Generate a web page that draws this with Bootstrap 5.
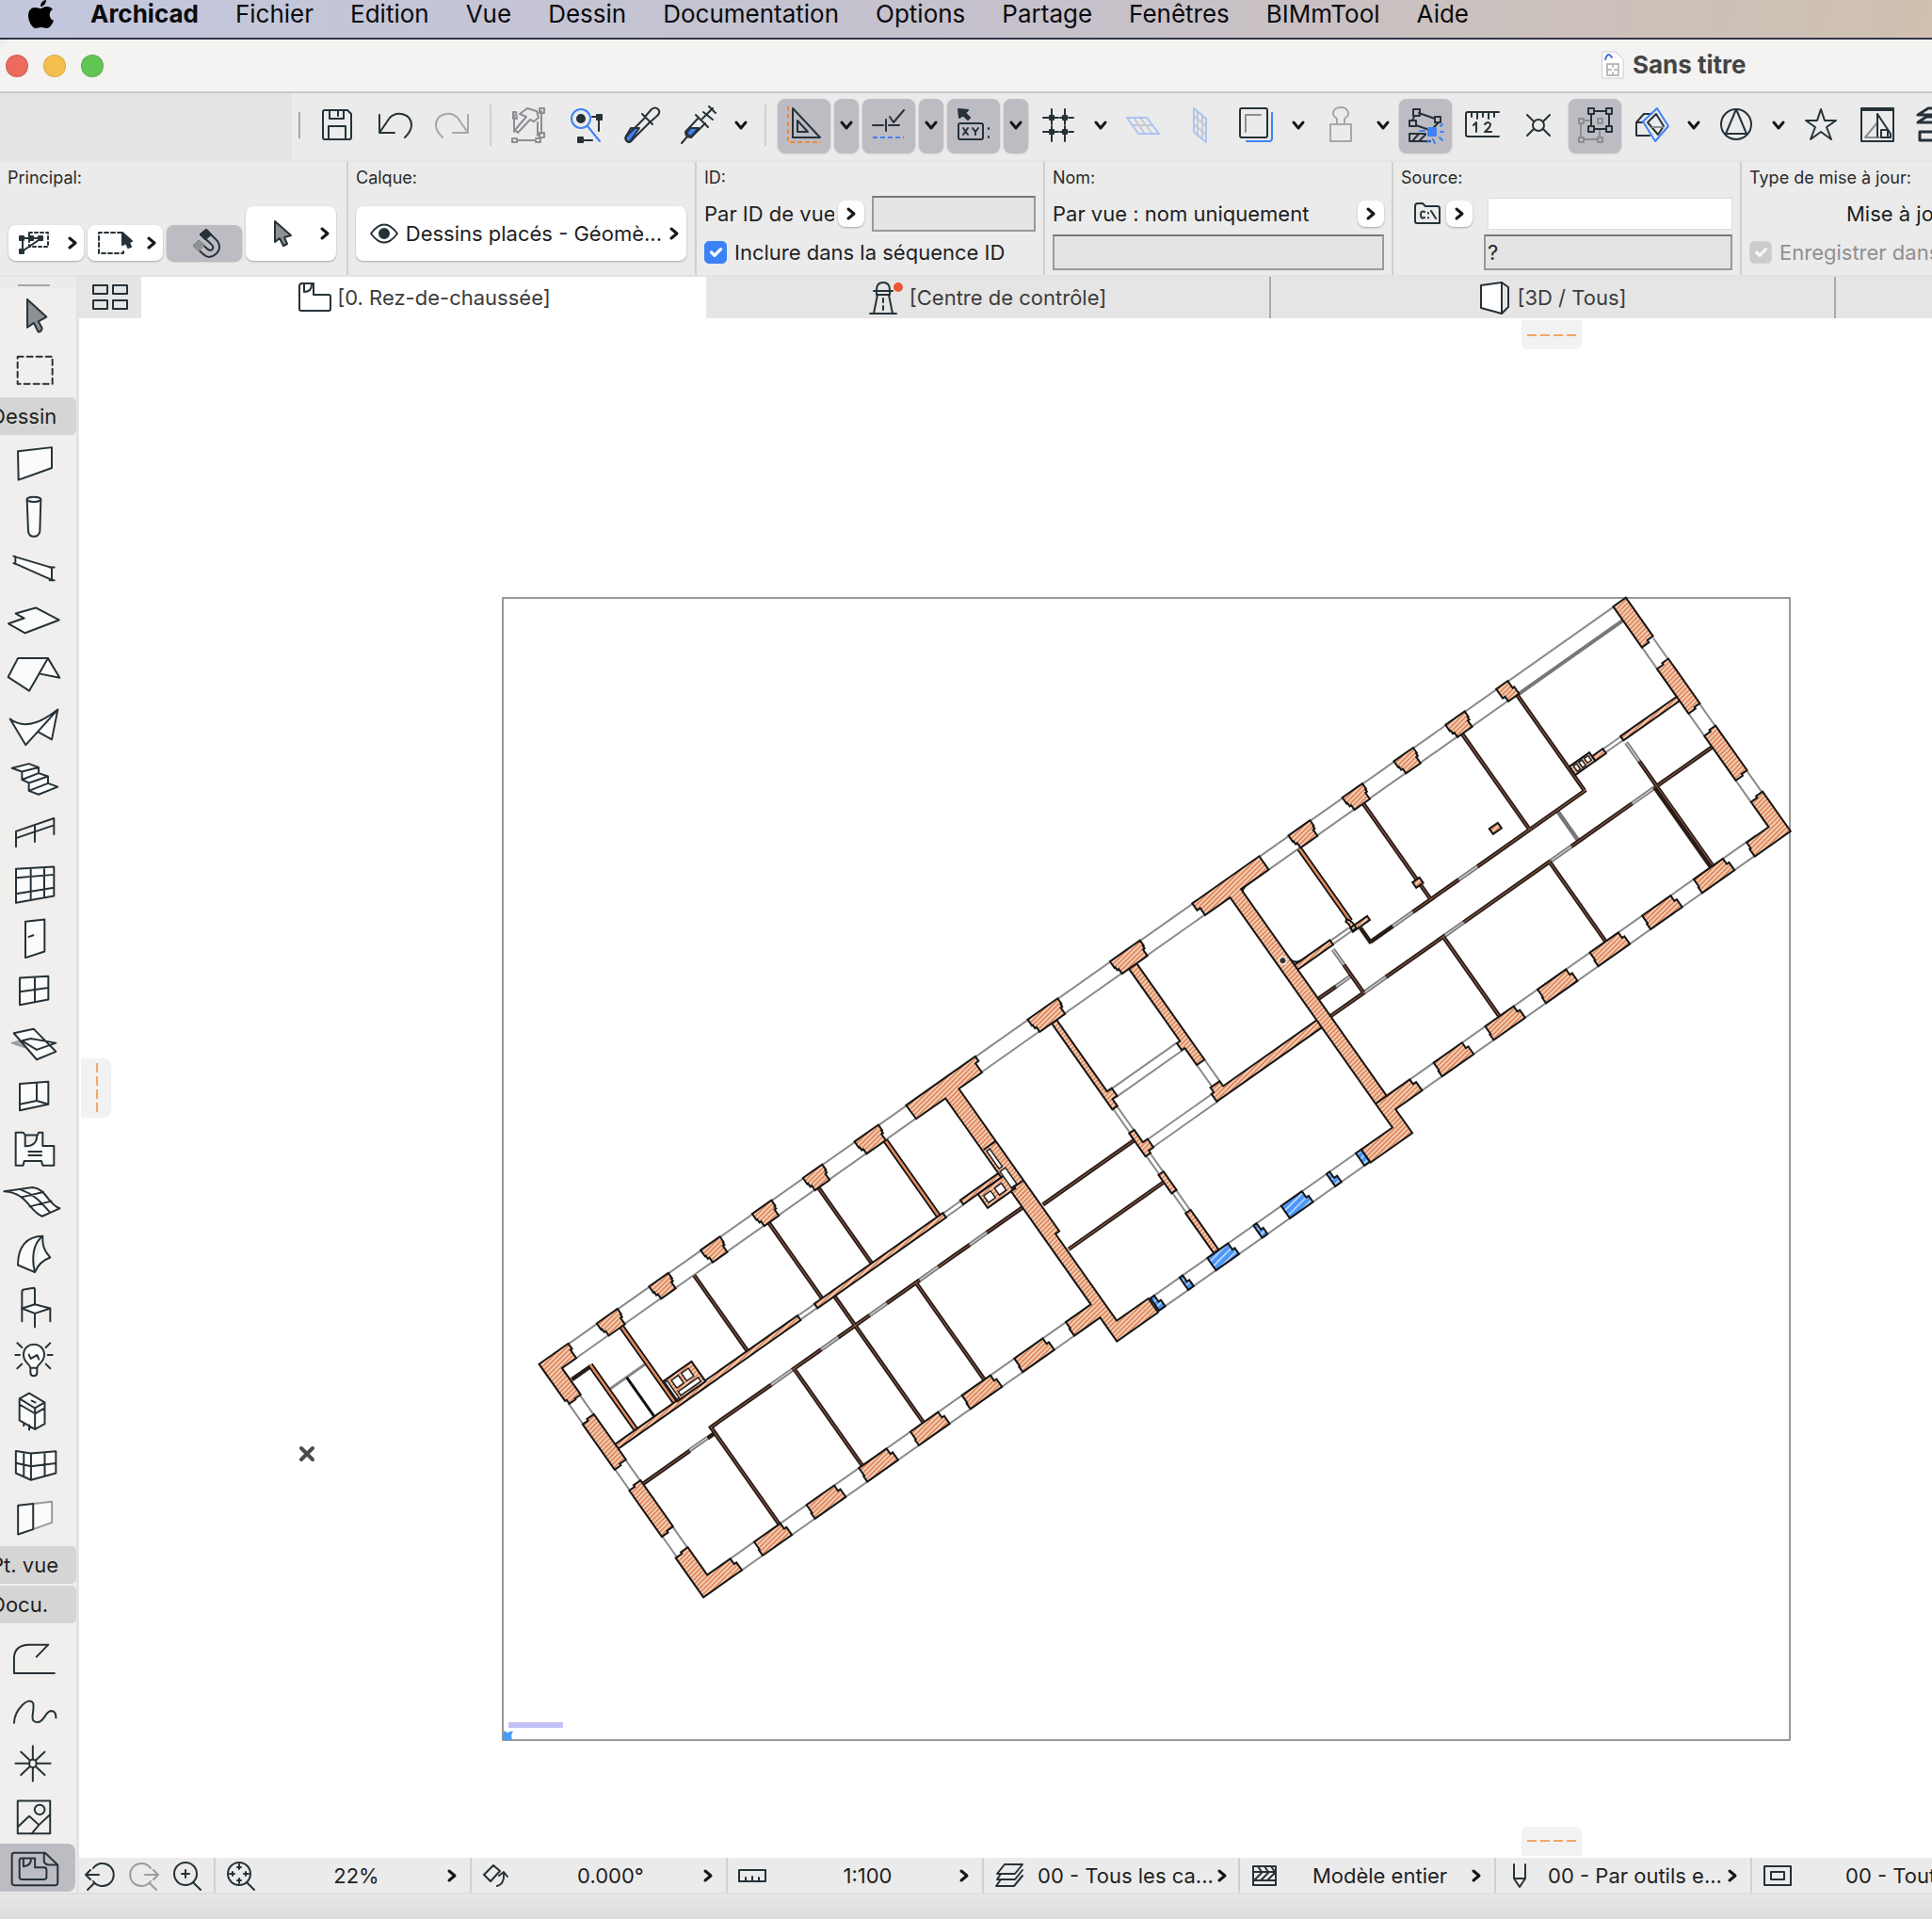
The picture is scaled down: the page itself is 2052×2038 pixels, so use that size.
<!DOCTYPE html>
<html lang="fr">
<head>
<meta charset="utf-8">
<meta name="viewport" content="width=device-width, initial-scale=1">
<title>Sans titre</title>
<link href="https://cdn.jsdelivr.net/npm/bootstrap@5.3.0/dist/css/bootstrap.min.css" rel="stylesheet">
<style>
:root{--ink:#263238;--bar:#ebebeb;--edge:#d0d0d0}
html,body{height:100%}
body{font-family:Inter,"Liberation Sans",sans-serif;font-size:22px;line-height:28px;color:#1f1f1f;background:#ebebeb;overflow:hidden}
button{font:inherit;color:inherit;border:0;background:none;padding:0}
svg{display:block;fill:none;stroke:var(--ink);stroke-width:2;stroke-linejoin:round;stroke-linecap:round;flex-shrink:0}
.menubar{height:42px;padding:0 30px;gap:39px;background:linear-gradient(90deg,#c3c8de,#c6c1cb 55%,#cfc0b0);border-bottom:2px solid #34354a;overflow:hidden}
.menubar a{color:#0b0b0d;text-decoration:none;font-size:26px;line-height:30px;white-space:nowrap}
.menubar svg{fill:#000;stroke:none}
.titlebar{height:57px;background:#f4f3f1;border-bottom:2px solid #c9c9c9;border-top-left-radius:12px}
.lights{flex:0 0 1584px;padding-left:6px}
.lamp{width:24px;height:24px;border-radius:50%;border:1px solid rgba(0,0,0,.12)}
.lamp.close-l{background:#ec6a5e}
.lamp.min-l{background:#f4bf4f}
.lamp.max-l{background:#61c554}
.doc-name{font-size:26px;font-weight:700;color:#454545}
.titled{margin-left:116px;padding-bottom:2px}
.toolbar-row{height:73px;border-bottom:2px solid #e4e4e4;overflow:hidden}
.tool-gap{width:310px;background:#e4e4e4}
.vline{width:2px;height:28px;background:#a9a9a9;margin:0 9px 0 7px}
.tools{gap:4px;padding-bottom:3px}
.tl{width:56px;height:57px;border-radius:8px;flex:none;display:flex;align-items:center;justify-content:center}
.tl.slim{width:26px}
.tl.on{background:#bdbcc2;box-shadow:0 1px 2px rgba(0,0,0,.25)}
.tsep{width:18px;height:44px;flex:none;background:linear-gradient(#cfcfcf,#cfcfcf) center/2px 100% no-repeat}
.chev{stroke:#161616;stroke-width:3}
.blue{stroke:#3f82f7}
.pale{stroke:#a9c4f3}
.ash{stroke:#a4a8aa}
.dim{stroke:#8b8e92}
.ink-fill{fill:#263238}
.blue-fill{fill:#3f82f7}
.infobar{height:122px;border-bottom:2px solid #e3e3e3;overflow:hidden}
.panel{width:370px;flex:none;border-right:2px solid var(--edge);padding:6px 8px 0 8px}
.panel .cap{font-size:18px;line-height:22px;display:block;color:#2a2a2a}
.prim{padding-top:19px;padding-left:1px}
.popb{background:#fff;border-radius:8px;box-shadow:0 1px 2px rgba(0,0,0,.3);display:flex;align-items:center;justify-content:center;flex:none}
.popb.sm{width:80px;height:38px;justify-content:space-between;padding:0 6px 0 10px}
.popb.on{background:#bdbcc2;justify-content:center}
.popb.md{width:96px;height:58px;justify-content:space-between;padding:0 6px 0 28px}
.popb.wide{width:351px;height:58px;gap:7px;margin-top:19px;justify-content:flex-end;padding-right:7px}
.popb.nub{width:28px;height:28px}
.fld{background:#e4e4e4;border:2px solid #999;border-top-color:#777;height:38px;padding:0 2px;color:#222;min-width:0;border-radius:0}
.fld.white{background:#fff;border:1px solid #ddd;height:34px}
.fld.file{width:264px}
.row2{height:40px}
.first{margin-top:7px}
.first+.row2{margin-top:1px}
.id-kind{width:138px;flex:none}
.upd{padding-left:103px}
.form-check-input.tick{width:24px;height:24px;margin:0;border-radius:5px;flex:none}
.tick:checked{background-color:#3b82f7;border-color:#3b82f7}
.tick:checked:disabled{background-color:#b9b9b9;border-color:#c4c4c4;opacity:.6}
.muted-l{color:#8f8f8f}
.palette{width:84px;flex:none;background:#f0efed;border-right:3px solid #e3e3e3;overflow:hidden}
.palette .grip{height:12px;border:solid #ebebeb;border-width:8px 28px 2px 19px;background:#a6a6a6}
.palette .pt{display:block;width:81px;height:56px}
.palette .pt svg{width:72px;height:56px}
.pt *{vector-effect:non-scaling-stroke}
.palette .f{fill:#fbfbfb}
.palette .tall .pt,.palette .tall svg{height:58px}
.palette .many{padding:2px 0}
.palette .docu{padding:10px 0 0}
.grp{height:40px;width:81px;background:#d5d5d5;border-radius:0 5px 5px 0;white-space:nowrap;line-height:40px;color:#222}
.grp+.grp{margin-top:2px}
.grp span{margin-left:-10px}
.palette .sel{background:#bdbcc2;border-radius:0 8px 8px 0;height:51px;width:80px}
.palette .sel svg{height:51px}
.tabs{height:44px;background:#e5e5e5;overflow:hidden}
.tabs .ov{width:66px;flex:none}
.tabs .tb{width:600px;flex:none;gap:5px;color:#3c3c3c;border-right:2px solid #aaa}
.tabs .tb.cur{background:#fff;border-right:0}
.sheet{background:#fff;overflow:hidden;min-height:0}
.statusbar{height:37px;overflow:hidden}
.cell{width:272px;flex:none;border-left:2px solid var(--edge);padding:0 13px 0 11px;gap:3px}
.cell .val{flex:1;text-align:center;white-space:nowrap;padding-left:11px}
.cell .val.start{text-align:left;padding-left:53px}
.nav3{width:143px;flex:none;padding-left:5px;gap:13px}
.foot{height:28px;background:linear-gradient(#e7e7e7,#dcdcdc);border-top:2px solid #dfdfdf}
</style>
<script src="https://cdn.jsdelivr.net/npm/bootstrap@5.3.0/dist/js/bootstrap.bundle.min.js"></script>
</head>
<body class="d-flex flex-column">
<svg width="0" height="0" class="position-absolute"><defs>
<symbol id="dn" viewBox="0 0 16 12"><path d="M3 3 8 9 13 3"/></symbol>
<symbol id="rt" viewBox="0 0 12 16"><path d="M3 3 9 8 3 13"/></symbol>
</defs></svg>

<nav class="menubar d-flex align-items-start flex-shrink-0">
<svg width="27" height="30" viewBox="0 0 27 30"><path d="M19 0C19 4 16 7 13 7C13 3 16 0 19 0ZM13 9C15 9 16 7 20 7C22 7 25 8 26 10C21 13 22 20 27 22C25 27 22 30 20 30C17 30 16 29 14 29C11 29 10 30 8 30C4 30 0 22 0 17C0 10 4 8 7 8C10 8 11 9 13 9Z"/></svg>
<a href="#" class="fw-bold">Archicad</a><a href="#">Fichier</a><a href="#">Edition</a><a href="#">Vue</a><a href="#">Dessin</a><a href="#">Documentation</a><a href="#">Options</a><a href="#">Partage</a><a href="#">Fenêtres</a><a href="#">BIMmTool</a><a href="#">Aide</a>
</nav>

<header class="titlebar d-flex align-items-center flex-shrink-0">
<div class="lights d-flex gap-3"><span class="lamp close-l"></span><span class="lamp min-l"></span><span class="lamp max-l"></span></div>
<div class="titled flex-fill d-flex align-items-center"><svg width="26" height="30" viewBox="0 0 26 30"><path d="M2 1H16L24 9V29H2Z" fill="#fff" style="stroke:#ccc;stroke-width:1"/><path d="M5 9Q8 0 12 7" style="stroke:#4a6fd8"/><path d="M7 14H19V26H7ZM7 20H11M15 20H19M13 14V17M13 23V26" style="stroke:#bbb"/></svg><span class="doc-name ms-2">Sans titre</span></div>
</header>

<div class="toolbar-row d-flex align-items-stretch flex-shrink-0">
<div class="tool-gap flex-shrink-0"></div>
<div class="tools d-flex align-items-center">
<span class="vline flex-shrink-0"></span>
<button class="tl" aria-label="Enregistrer"><svg width="40" height="36" viewBox="0 0 40 36"><path d="M3 4Q3 2 5 2H29L33 6V31Q33 33 31 33H5Q3 33 3 31ZM10 2V11H25V2M19 3V8M9 33V19H27V33"/></svg></button>
<button class="tl" aria-label="Annuler"><svg width="40" height="36" viewBox="0 0 40 36"><path d="M3 7V26H19M3 26L14 10C22 2 37 6 37 18C37 23 34 27 30 31"/></svg></button>
<button class="tl" aria-label="Rétablir"><svg class="ash" width="40" height="36" viewBox="0 0 40 36"><path d="M37 7V26H21M37 26L26 10C18 2 3 6 3 18C3 23 6 27 10 31"/></svg></button>
<span class="tsep"></span>
<button class="tl" aria-label="Suspendre"><svg class="dim" width="40" height="40" viewBox="0 0 40 40"><path d="M4 9V27M33 5V29M8 36H27M6 6H3V13H7ZM31 2H36V7H31ZM31 28H36V33H31ZM2 34H7V38H2ZM27 34H32V38H27M10 8 18 2 28 5 30 12 25 16 21 14 8 28 5 25 17 11ZM29 17V31"/></svg></button>
<button class="tl" aria-label="Rechercher"><svg width="40" height="42" viewBox="0 0 40 42"><circle class="blue" cx="15" cy="14" r="10" stroke-width="2"/><path class="blue" d="M22 22 35 38"/><circle class="ink-fill" cx="15" cy="14" r="4"/><path d="M34 12V27M17 37H27M27 12H34"/><path class="ink-fill" d="M32 10h5v5h-5zM12 34h5v5h-5z"/></svg></button>
<button class="tl" aria-label="Pipette"><svg width="40" height="42" viewBox="0 0 40 42"><path class="blue-fill" d="M8 24 17 24 8 37Q5 40 3 37T4 31Z"/><path d="M23 12 30 4Q34 1 37 4T36 11L28 18M20 9 31 20M23 13 5 31Q1 35 4 38T11 35L28 18"/></svg></button>
<button class="tl" aria-label="Seringue"><svg width="40" height="42" viewBox="0 0 40 42"><path class="blue-fill" d="M11 24 20 24 12 33 7 30Z"/><path d="M2 40 8 33M20 13 6 28Q6 34 12 34L27 19M17 10 30 23M24 14 35 3M31 1 38 8M25 7 35 15"/></svg></button>
<button class="tl slim" aria-label="Plus"><svg class="chev" width="16" height="12"><use href="#dn"/></svg></button>
<span class="tsep"></span>
<button class="tl on" aria-label="Équerre"><svg width="40" height="42" viewBox="0 0 40 42"><path d="M3 1V39H38" style="stroke:#f0883a" stroke-dasharray="5 3" stroke-linecap="butt"/><path d="M8 3V34H37ZM13 16V28H24Z"/></svg></button>
<button class="tl slim on" aria-label="Plus"><svg class="chev" width="16" height="12"><use href="#dn"/></svg></button>
<button class="tl on" aria-label="Guides"><svg width="40" height="42" viewBox="0 0 40 42"><path d="M3 21H14M20 21H31M17 15V27M21 12 25 18 36 5"/><path class="blue" d="M3 34H36" stroke-dasharray="5 3" stroke-linecap="butt"/></svg></button>
<button class="tl slim on" aria-label="Plus"><svg class="chev" width="16" height="12"><use href="#dn"/></svg></button>
<button class="tl on" aria-label="Coordonnées"><svg width="40" height="42" viewBox="0 0 40 42"><path class="ink-fill" d="M4 4 14 5 11 8 16 13 14 15 9 10 5 13Z"/><rect x="4" y="19" width="26" height="17" rx="2"/><path d="M9 24 14 31M14 24 9 31M19 24 22 28V31M25 24 22 28M36 24V25M36 33V34"/></svg></button>
<button class="tl slim on" aria-label="Plus"><svg class="chev" width="16" height="12"><use href="#dn"/></svg></button>
<button class="tl" aria-label="Grille"><svg width="40" height="42" viewBox="0 0 40 42"><path d="M4 13H36M4 28H36M13 4V38M27 4V38" stroke-dasharray="7 2"/><path class="ink-fill" d="M11 11h4v4h-4zM25 11h4v4h-4zM11 26h4v4h-4zM25 26h4v4h-4z"/></svg></button>
<button class="tl slim" aria-label="Plus"><svg class="chev" width="16" height="12"><use href="#dn"/></svg></button>
<button class="tl" aria-label="Plan horizontal"><svg class="pale" width="40" height="42" viewBox="0 0 40 42"><path d="M9 21H30M10 13 22 30M17 13 30 30" style="stroke:#c3c9d2"/><path d="M3 13H24L37 30H15Z"/></svg></button>
<button class="tl" aria-label="Plan vertical"><svg class="pale" width="40" height="42" viewBox="0 0 40 42"><path d="M14 11 27 22M14 20 27 31M18 6V31M23 10V35" style="stroke:#c3c9d2"/><path d="M14 3 27 14V39L14 28Z"/></svg></button>
<button class="tl" aria-label="Calques"><svg width="40" height="42" viewBox="0 0 40 42"><path class="blue" d="M10 38H34Q37 38 37 35V8"/><rect x="3" y="3" width="29" height="31" rx="2"/><path class="dim" d="M9 28V10H25"/></svg></button>
<button class="tl slim" aria-label="Plus"><svg class="chev" width="16" height="12"><use href="#dn"/></svg></button>
<button class="tl" aria-label="Tampon"><svg class="ash" width="40" height="42" viewBox="0 0 40 42"><path d="M16 19V14Q11 11 12 7Q14 2 20 2T28 7Q29 11 24 14V19M9 20H31V38H9Z"/></svg></button>
<button class="tl slim" aria-label="Plus"><svg class="chev" width="16" height="12"><use href="#dn"/></svg></button>
<button class="tl on" aria-label="Trace"><svg width="40" height="42" viewBox="0 0 40 42"><path d="M13 8 30 14M8 12 6 16M10 21 24 26M7 4h7v7H7zM30 12h6v6h-6zM3 16h7v6H3zM34 18 28 24M20 30H3V38H25M6 38 13 30M13 38 20 31"/><path class="blue blue-fill" d="M23 24h8v8h-8z"/><path class="blue" d="M14 27H19M36 22 38 20M36 28H39M35 34 38 37M28 36 30 40M24 37 22 39"/></svg></button>
<button class="tl" aria-label="Mesure"><svg width="40" height="42" viewBox="0 0 40 42"><path d="M38 7H5Q3 7 3 9V31Q3 33 5 33H38M9 7V12M15 7V14M21 7V12M27 7V14M33 7V12M11 21 14 18V28M23 20Q27 16 29 20Q29 23 23 28H30"/></svg></button>
<button class="tl" aria-label="Intersection"><svg width="40" height="42" viewBox="0 0 40 42"><circle cx="20" cy="21" r="6"/><path d="M8 10 15 17M32 10 25 17M8 32 15 25M32 32 25 25"/></svg></button>
<button class="tl on" aria-label="Grouper"><svg width="40" height="42" viewBox="0 0 40 42"><path class="dim" d="M3 14h5v5H3zM3 34h5v5H3zM23 34h5v5h-5zM5 19V34M8 36H23M8 16H14M25 27V34M23 14h5v5h-5z"/><path d="M13 3h6v6h-6zM32 3h6v6h-6zM13 22h6v6h-6zM32 22h6v6h-6zM19 6H32M19 25H32M16 9V22M35 9V22"/></svg></button>
<button class="tl" aria-label="Coupe 3D"><svg width="40" height="42" viewBox="0 0 40 42"><path d="M4 18 12 9H20M4 18V32H18M4 18H10M16 18 25 9 33 22 27 31Z"/><path class="dim" d="M21 23H32"/><path class="blue" d="M26 3 38 22 24 38 11 17Z"/></svg></button>
<button class="tl slim" aria-label="Plus"><svg class="chev" width="16" height="12"><use href="#dn"/></svg></button>
<button class="tl" aria-label="Orientation"><svg width="40" height="42" viewBox="0 0 40 42"><circle cx="20" cy="20" r="16"/><path d="M20 4 9 30H31Z"/></svg></button>
<button class="tl slim" aria-label="Plus"><svg class="chev" width="16" height="12"><use href="#dn"/></svg></button>
<button class="tl" aria-label="Favoris"><svg width="40" height="42" viewBox="0 0 40 42"><path d="M20 4 24 16H36L26 23 31 36 20 28 9 36 14 23 4 16H16Z"/></svg></button>
<button class="tl" aria-label="Bibliothèque"><svg width="40" height="42" viewBox="0 0 40 42"><path class="dim" d="M7 34 20 18M7 34H22"/><path d="M3 3H37V38H3ZM3 5H37M20 9 34 30V34H24V26H31V34M20 9V33"/></svg></button>
<button class="tl" aria-label="Étages"><svg width="40" height="42" viewBox="0 0 40 42"><path d="M3 10 14 3H38M3 10H38M3 18 12 12H38M3 18H38M5 28H38V37H5Z" stroke-width="3"/></svg></button>
</div>
</div>

<div class="infobar d-flex flex-shrink-0">
<section class="panel"><span class="cap">Principal:</span>
<div class="prim d-flex align-items-end gap-1">
<button class="popb sm" aria-label="Sélection"><svg width="34" height="28" viewBox="0 0 34 28"><path d="M12 3H32V18H12Z" stroke-dasharray="3 3"/><path d="M3 9H25M5 9V24M25 9 3 24"/><path class="ink-fill" d="M2 7h4v4H2zM12 7h4v4h-4zM22 7h4v4h-4zM2 21h4v4H2z"/></svg><svg class="chev" width="12" height="16"><use href="#rt"/></svg></button>
<button class="popb sm" aria-label="Zone de sélection"><svg width="38" height="28" viewBox="0 0 38 28"><path d="M26 3H2V25H28V20" stroke-dasharray="4 3"/><path class="ink-fill" d="M27 3 37 12 34 13 36 18 33 19 31 14 27 16Z"/></svg><svg class="chev" width="12" height="16"><use href="#rt"/></svg></button>
<button class="popb sm on" aria-label="Aimant"><svg width="34" height="34" viewBox="0 0 34 34"><path d="M11 8 17 3 29 15Q34 23 27 29T14 29L4 20 9 15 19 24Q23 26 24 23T22 18Z"/><path class="ink-fill" d="M11 8 17 3 22 8 16 13Z"/><path d="M4 20 9 15 14 20 9 25Z" fill="#8d9193" style="stroke:#8d9193"/></svg></button>
<button class="popb md" aria-label="Flèche"><svg width="22" height="32" viewBox="0 0 22 32"><path d="M3 3V25L8 21 12 29 16 27 13 20 20 18Z" fill="#8d9193"/></svg><svg class="chev" width="12" height="16"><use href="#rt"/></svg></button>
</div></section>
<section class="panel"><span class="cap">Calque:</span>
<button class="popb wide"><svg width="32" height="24" viewBox="0 0 32 24"><path d="M2 12Q16-7 30 12Q16 31 2 12Z"/><circle class="ink-fill" cx="16" cy="12" r="5"/></svg><span class="text-nowrap">Dessins placés - Géomè...</span><svg class="chev" width="12" height="16"><use href="#rt"/></svg></button></section>
<section class="panel"><span class="cap">ID:</span>
<div class="row2 first d-flex align-items-center"><span class="id-kind text-nowrap overflow-hidden">Par ID de vue</span><button class="popb nub ms-1 me-2" aria-label="Choisir ID"><svg class="chev" width="12" height="16"><use href="#rt"/></svg></button><input class="fld w-100" aria-label="ID"></div>
<label class="row2 d-flex align-items-center gap-2 text-nowrap"><input type="checkbox" class="form-check-input tick" checked>Inclure dans la séquence ID</label></section>
<section class="panel"><span class="cap">Nom:</span>
<div class="row2 first d-flex align-items-center justify-content-between"><span class="text-nowrap">Par vue : nom uniquement</span><button class="popb nub" aria-label="Choisir nom"><svg class="chev" width="12" height="16"><use href="#rt"/></svg></button></div>
<div class="row2 d-flex align-items-center"><input class="fld w-100" aria-label="Nom"></div></section>
<section class="panel"><span class="cap">Source:</span>
<div class="row2 first d-flex align-items-center ps-2"><svg class="ms-1" width="32" height="28" viewBox="0 0 32 28"><path d="M3 22V6Q3 3 6 3H11L14 6H27Q29 6 29 9V24H5Q3 24 3 22M13 12Q9 10 9 15T13 18M17 13v.5M17 18v.5M20 11 25 19"/></svg><button class="popb nub ms-1" aria-label="Source"><svg class="chev" width="12" height="16"><use href="#rt"/></svg></button><input class="fld white flex-fill ms-3" aria-label="Chemin"></div>
<div class="row2 d-flex align-items-center justify-content-end"><input class="fld file" value="?" aria-label="Fichier"></div></section>
<section class="panel"><span class="cap">Type de mise à jour:</span>
<div class="upd row2 first d-flex align-items-center text-nowrap">Mise à jour auto</div>
<label class="muted-l row2 d-flex align-items-center gap-2 text-nowrap"><input type="checkbox" class="form-check-input tick" checked disabled>Enregistrer dans</label></section>
</div>

<div class="d-flex flex-fill" style="min-height:0">
<aside class="palette d-flex flex-column">
<div class="grip"></div>
<div class="tall">
<button class="pt" aria-label="Flèche"><svg viewBox="0 45 216 146" preserveAspectRatio="none"><path d="M87 75V150L108 138L122 162Q132 162 134 152L122 134L148 122Z" fill="#8d9193"/></svg></button>
<button class="pt" aria-label="Zone"><svg viewBox="0 195 216 146" preserveAspectRatio="none"><rect x="56" y="232" width="111" height="73" stroke-dasharray="6 4"/></svg></button>
</div>
<div class="grp"><span>Dessin</span></div>
<div class="many">
<button class="pt" aria-label="Mur"><svg viewBox="0 454 216 146" preserveAspectRatio="none"><path class="f" d="M57 494 165 483V540L59 573Z"/></svg></button>
<button class="pt" aria-label="Poteau"><svg viewBox="0 602 216 146" preserveAspectRatio="none"><path class="f" d="M86 630 90 718Q93 732 108 732T127 718L130 630"/><ellipse class="f" cx="108" cy="629" rx="22" ry="7"/></svg></button>
<button class="pt" aria-label="Poutre"><svg viewBox="0 749 216 146" preserveAspectRatio="none"><path class="f" d="M49 789 165 819V853L49 808Z"/><path d="M43 787 49 789M43 807 49 808M158 818H173M158 854H173"/></svg></button>
<button class="pt" aria-label="Dalle"><svg viewBox="0 892 216 146" preserveAspectRatio="none"><path class="f" d="M50 943 114 927 188 961 80 997 27 971 77 956Z"/></svg></button>
<button class="pt" aria-label="Toit"><svg viewBox="0 1039 216 146" preserveAspectRatio="none"><path class="f" d="M57 1068H153L93 1158 26 1120ZM153 1068 190 1122 128 1111"/></svg></button>
<button class="pt" aria-label="Coque"><svg viewBox="0 1185 216 146" preserveAspectRatio="none"><path class="f" d="M32 1236Q90 1275 184 1210L82 1308ZM184 1210 165 1293 122 1272"/></svg></button>
<button class="pt" aria-label="Escalier"><svg viewBox="0 1331 216 146" preserveAspectRatio="none"><path class="f" d="M38 1372 92 1360 123 1370 70 1382ZM70 1382V1404L92 1413 153 1395 123 1386V1370M92 1413V1435L123 1445 184 1424 153 1414V1395M70 1404 123 1386M92 1435 153 1414"/></svg></button>
<button class="pt" aria-label="Garde-corps"><svg viewBox="0 1479 216 146" preserveAspectRatio="none"><path d="M51 1592V1549L172 1513V1557M111 1532V1578M51 1568 172 1532"/></svg></button>
<button class="pt" aria-label="Mur-rideau"><svg viewBox="0 84 216 146" preserveAspectRatio="none"><path class="f" d="M51 112 172 106V187L51 206ZM51 137 172 128M51 181 172 164M98 110V198M141 108V191"/></svg></button>
<button class="pt" aria-label="Porte"><svg viewBox="0 230 216 146" preserveAspectRatio="none"><path class="f" d="M81 258 142 252V341L81 358ZM92 300 106 296"/></svg></button>
<button class="pt" aria-label="Fenêtre"><svg viewBox="0 376 216 146" preserveAspectRatio="none"><path class="f" d="M63 414 154 409V474L63 489ZM63 452 154 441M111 411V481"/></svg></button>
<button class="pt" aria-label="Lucarne"><svg viewBox="0 522 216 146" preserveAspectRatio="none"><path d="M38 594 72 587 80 606Z" fill="#aaa" style="stroke:#999"/><path class="f" d="M44 567 107 555 178 618 117 640ZM70 588 98 582 178 594 117 613Z"/></svg></button>
<button class="pt" aria-label="Ouverture"><svg viewBox="0 669 216 146" preserveAspectRatio="none"><path class="f" d="M63 708 154 702V765L63 782ZM63 765 117 755 154 765M117 705V755"/></svg></button>
<button class="pt" aria-label="Surface"><svg viewBox="0 815 216 146" preserveAspectRatio="none"><path class="f" d="M50 843H74L80 850H120L123 843H136V880H172V934H136L132 922H77L74 934H50ZM80 850V881Q117 882 118 850M91 896H132M91 906H132"/></svg></button>
<button class="pt" aria-label="Maillage"><svg viewBox="0 961 216 146" preserveAspectRatio="none"><path class="f" d="M13 1006 104 995C150 1000 150 1040 190 1053L134 1075C90 1060 90 1010 13 1006Z"/><path d="M68 1022 138 1008M95 1048 163 1033M66 1001C110 1015 130 1035 158 1063"/></svg></button>
<button class="pt" aria-label="Forme"><svg viewBox="0 1107 216 146" preserveAspectRatio="none"><path class="f" d="M57 1210C57 1160 85 1130 136 1130C134 1160 145 1175 160 1189C140 1195 120 1210 111 1230ZM136 1130C105 1150 100 1190 111 1230"/></svg></button>
<button class="pt" aria-label="Objet"><svg viewBox="0 1254 216 146" preserveAspectRatio="none"><path class="f" d="M70 1331 111 1320 160 1331 111 1345Z"/><path d="M70 1367V1285Q70 1278 80 1278L107 1274Q111 1274 111 1280V1320M111 1345V1383M160 1331V1367"/></svg></button>
<button class="pt" aria-label="Lampe"><svg viewBox="0 1401 216 146" preserveAspectRatio="none"><path class="f" d="M97 1497C96 1485 74 1482 75 1460C76 1422 140 1422 141 1460C142 1482 119 1485 118 1497V1510Q118 1519 108 1519T97 1510ZM97 1497H118"/><path d="M92 1460 98 1471 118 1461 124 1473M49 1461H63M152 1461H167M55 1428 70 1440M160 1428 146 1440M55 1498 70 1486M160 1498 146 1486"/></svg></button>
<button class="pt" aria-label="Équipement"><svg viewBox="0 3 188 155" preserveAspectRatio="none"><path class="f" d="M54 40 81 24 124 51V114L97 130 54 104ZM54 40 97 68 124 51M97 68V130M54 57 97 84 124 68M88 46 98 51M66 110V120M81 118V132"/></svg></button>
<button class="pt" aria-label="Fenêtre d'angle"><svg viewBox="0 159 188 155" preserveAspectRatio="none"><path class="f" d="M44 195 86 202 155 196V260L86 280 44 260ZM86 202V280M66 199V270M124 199V269M44 230 86 240 155 231"/></svg></button>
<button class="pt" aria-label="Fin de mur"><svg viewBox="0 314 188 155" preserveAspectRatio="none"><path class="f" d="M92 350 144 344V405L92 425" style="stroke:#999"/><path class="f" d="M50 355 92 350V425L50 440Z"/></svg></button>
</div>
<div class="grp"><span>Pt. vue</span></div>
<div class="grp"><span>Docu.</span></div>
<div class="docu">
<button class="pt" aria-label="Polyligne"><svg viewBox="0 729 188 155" preserveAspectRatio="none"><path d="M151 848H39V800Q42 765 80 764H134L101 800"/></svg></button>
<button class="pt" aria-label="Spline"><svg viewBox="0 883 188 155" preserveAspectRatio="none"><path d="M39 993C40 955 80 912 92 935C97 960 78 991 105 991C125 988 125 958 143 958Q156 960 155 978"/></svg></button>
<button class="pt" aria-label="Point chaud"><svg viewBox="0 1038 188 155" preserveAspectRatio="none"><ellipse cx="91" cy="1112" rx="10" ry="12"/><path d="M91 1061V1100M91 1124V1164M43 1112H80M102 1112H140M58 1078 83 1103M124 1078 99 1103M58 1146 83 1121M124 1146 99 1121"/></svg></button>
<button class="pt" aria-label="Figure"><svg viewBox="0 1193 188 155" preserveAspectRatio="none"><rect x="49" y="1222" width="90" height="96"/><ellipse cx="110" cy="1248" rx="14" ry="14"/><path d="M50 1298 81 1267 108 1293 139 1262M89 1317 108 1293"/></svg></button>
</div>
<button class="pt sel" aria-label="Dessin"><svg viewBox="0 1350 188 141" preserveAspectRatio="none"><path d="M39 1377H125L160 1412V1465Q160 1472 153 1472H40Q33 1472 33 1465V1384Q33 1377 39 1377ZM122 1378V1402Q124 1411 134 1412H160M60 1393H97V1420H123Q129 1420 129 1427V1448Q129 1454 122 1455H60Q54 1454 54 1448V1400Q54 1393 60 1393M65 1395V1417Q86 1415 86 1395"/></svg></button>
</aside>

<main class="flex-fill d-flex flex-column" style="min-width:0">
<div class="tabs d-flex flex-shrink-0">
<button class="ov d-flex align-items-center justify-content-center" aria-label="Aperçu"><svg width="42" height="32" viewBox="0 0 42 32"><path d="M3 3H18V12H3ZM24 3H39V12H24ZM3 19H18V28H3ZM24 19H39V28H24Z"/></svg></button>
<button class="tb cur d-flex align-items-center justify-content-center"><svg width="38" height="34" viewBox="0 0 38 34"><path d="M3 5Q3 2 6 2H18V14H34Q36 14 36 16V29Q36 31 34 31H5Q3 31 3 29ZM8 3V11Q16 11 16 3"/></svg>[0. Rez-de-chaussée]</button>
<button class="tb d-flex align-items-center justify-content-center"><svg width="38" height="38" viewBox="0 0 38 38"><path d="M8 11Q8 3 15 3T22 11M5 12H25M8 12V16H22V12M9 16 5 36M21 16 25 36M1 36H29M15 20V24M15 28V32"/><circle cx="31" cy="8" r="5" fill="#ee5533" style="stroke:none"/></svg>[Centre de contrôle]</button>
<button class="tb d-flex align-items-center justify-content-center"><svg width="36" height="38" viewBox="0 0 36 38"><path d="M3 6 25 3V36L3 30Z" fill="#fff"/><path d="M25 3 32 8V29L25 36"/></svg>[3D / Tous]</button>
</div>
<div class="sheet flex-fill position-relative">
<svg id="plan" class="w-100 h-100" viewBox="84 338 1968 1635" preserveAspectRatio="xMinYMin meet">
<defs><pattern id="brick" width="3.600" height="3.600" patternUnits="userSpaceOnUse" patternTransform="rotate(-9.800)"><rect width="4" height="4" fill="#f6d3bf" style="stroke:none"/><rect width="4" height="1.900" fill="#e08a5c" style="stroke:none"/></pattern>
<pattern id="water" width="6" height="6" patternUnits="userSpaceOnUse" patternTransform="rotate(-9.800)"><rect width="6" height="6" fill="#4b97f7" style="stroke:none"/><rect width="6" height="1.400" fill="#cfe3ff" style="stroke:none"/></pattern></defs>
<g style="stroke:none"><path d="M1616 340H1680V363Q1680 371 1672 371H1624Q1616 371 1616 363ZM1616 1971H1680V1948Q1680 1940 1672 1940H1624Q1616 1940 1616 1948ZM86 1124H110Q118 1124 118 1132V1179Q118 1187 110 1187H86Z" fill="#f2f2f2"/></g>
<path d="M1622 356H1676M1622 1955H1676M103 1129V1183" stroke-linecap="butt" stroke-dasharray="10 4" style="stroke:#f3a764"/>
<rect x="534" y="635" width="1367" height="1213" style="stroke:#999"/>
<path d="M540 1832H598" stroke-linecap="butt" style="stroke:#c4c3f7;stroke-width:6"/>
<path d="M535 1838 539 1840 545 1838 543 1843 544 1848H534Z" fill="#4b9bf8" style="stroke:none"/>
<path d="M320 1538 332 1550M332 1538 320 1550" style="stroke:#4a4a4a;stroke-width:4"/>
<g transform="translate(572.5 1448.7) rotate(-35.190)" stroke-linejoin="miter" stroke-linecap="butt">
<path style="stroke:#8a8a8a;stroke-width:2" d="M0 .5H1412M20 17.500H1258M47 303H516M17 286H516M899 303H1366M899 286H1380M569 317H846M569 333H846M1.500 52V252M16.500 52V252M1411.500 52V255M1396 52V255M664 111.500H750M664 121.500H750M665 177.500H750M665 187.500H750M754 143V171M764 143V171M654.500 130V161M659.500 130V161M654.500 191V215M659.500 191V215M654.500 239V265M659.500 239V265M254 116.500H276M254 121.500H276M443 116.500H466M443 121.500H466M946 117H970M946 121.500H970M1300 117.500H1323M1300 122H1323"/>
<path style="stroke:#888;stroke-width:3" d="M44 65H93"/>
<path style="stroke:#777;stroke-width:4" d="M1259 18H1396"/>
<path style="stroke:#777;stroke-width:4.500" d="M78 167H101M189 160H216M254 160H276M317 160H339M382 160H406M447 160H469M1009 142.500H1035M1095 142.500H1119M944 182.500H972M1049 182.500H1073M1186 182.500H1213M1292 182.500H1326M1222.500 144V181M1324 126V150M943 126V146M923 160H943"/>
<path style="stroke:#c9c9c9;stroke-width:1.500" d="M78 167H101M189 160H216M254 160H276M317 160H339M382 160H406M447 160H469M1009 142.500H1035M1095 142.500H1119M944 182.500H972M1049 182.500H1073M1186 182.500H1213M1292 182.500H1326M1324 126V150M943 126V146M923 160H943"/>
<path style="stroke:#2a1c17;stroke-width:4.500" d="M17 167.500H78M101 167.500H110M110.500 158V286M110 160H189M216 160H254M276 160H317M339 160H382M406 160H447M469 160H516M218.500 160V286M298 122V286M377 160V286M189 18V116M286 18V116M350.500 18V116M19 33.500H44M535 170H653M530 224.500H654M980 124V144M980 142.500H1009M1035 142.500H1095M1119 142.500H1260M1058.500 18V142M1187 18V142M1258.500 18V142M1324 150V182M899 182.500H944M972 182.500H1049M1073 182.500H1186M1213 182.500H1292M1326 182.500H1396M1046.500 182V286M1184.500 182V286M943 146V182M899 160H923"/>
<path style="stroke:#2a1c17;stroke-width:7" d="M1322.500 182V286"/>
<path style="stroke:#8a5c4a;stroke-width:1" d="M17 167.500H78M110.500 159V286M110 160H189M216 160H254M276 160H317M339 160H382M406 160H447M469 160H516M218.500 160V286M298 122V286M377 160V286M189 18V116M286 18V116M350.500 18V116M535 170H653M530 224.500H654M1035 142.500H1095M1119 142.500H1260M1058.500 18V142M1187 18V142M1258.500 18V142M1324 150V286M899 182.500H944M972 182.500H1049M1073 182.500H1186M1213 182.500H1292M1326 182.500H1396M1046.500 182V286M1184.500 182V286M943 146V182M899 160H923"/>
<path style="stroke:#111;stroke-width:3" d="M68 65V116"/>
<path style="stroke:#111;stroke-width:6" d="M94.500 18V116M44 32V116M437.500 18V117M975.500 18V112"/>
<path style="stroke:#e08a5c;stroke-width:2.500" d="M94.500 18V116M44 32V116M437.500 18V117M975.500 18V112"/>
<g fill="url(#brick)" style="stroke:#151515;stroke-width:2">
<path d="M17 116H254V122H17ZM276 116H443V122H276ZM466 115.500H517V121H466ZM1323 117H1397V122.500H1323ZM899 116H946V122H899ZM1286 117H1300V123H1286Z"/>
<path d="M653.500 18H660V111H666V121H660V130H653.500ZM653.500 161H660V177H666V188H660V191H653.500ZM653.500 215H660V239H653.500ZM653.500 265H660V317H653.500Z"/>
<path d="M754 18H764V143H754V121H750V112H754ZM752 171H764V177.500H886V187H749V177H752Z"/>
<path d="M0 0H38V7H36V17.500H17.500V52H10V53H2V48H0ZM1396 0H1412.500V50H1405V53H1396ZM0 252H8V250H17V286H47V293H50V303H0Z"/>
<path d="M477 0H567V6H563V18H533V203H528V316H569V334H515.500V303H482V294H483V286H515.500V18H477.500Z"/>
<path d="M849 0H936V17.500H900V286H930V292H934V303H899.500V334H845V317H885.500V18H853V9H849Z"/>
<path d="M1396 254H1404V252H1412.500V303.500H1366V294H1367.500V286.500H1396Z"/>
<path d="M1244 0H1259V9H1261V18H1247V12H1244Z"/>
<path d="M97 91H134V117H97ZM485 121H521V139H485ZM1260 112H1286V123H1260ZM1053 116.500H1062V123.500H1053ZM1152.500 117H1163.500V124H1152.500ZM971 118H993V123H971ZM973 108Q978 113 976 122L971 122Q973 115 971 110Z"/>
<path d="M517 86H533M517 137H533M886 286H900"/>
</g>
<path fill="#fff" style="stroke:#222;stroke-width:1.500" d="M105 95H114V105H105ZM118 95H127V105H118ZM104 109H130V114H104ZM98 93H101V115H98ZM489 126H498V135H489ZM503 126H512V135H503ZM518 115H525V136H518ZM519 89H523V112H519ZM1264 114H1268V121H1264ZM1271 114H1275V121H1271ZM1278 114H1283V120H1278Z"/>
<path style="stroke:#151515;stroke-width:2" d="M900 22Q900 18 905 18M900 108Q901 116 909 116"/>
<circle cx="892.500" cy="105" r="4" fill="#333" style="stroke:#f3e4da;stroke-width:2"/>
</g></svg>
</div>
<div class="statusbar d-flex flex-shrink-0">
<div class="nav3 d-flex align-items-center">
<button aria-label="Zoom précédent"><svg width="34" height="32" viewBox="0 0 34 32"><path d="M10 8A12 12 0 1 1 10 22M2 15H16M7 10 2 15 7 20M11 24 4 31"/></svg></button>
<button aria-label="Zoom suivant"><svg width="34" height="32" viewBox="0 0 34 32" style="stroke:#9a9da0"><path d="M24 8A12 12 0 1 0 24 22M18 15H32M27 10 32 15 27 20M23 24 30 31"/></svg></button>
<button aria-label="Zoom avant"><svg width="32" height="32" viewBox="0 0 32 32"><circle cx="14" cy="14" r="12"/><path d="M14 10V18M10 14H18M22 23 30 31"/></svg></button>
</div>
<div class="cell d-flex align-items-center"><svg width="32" height="32" viewBox="0 0 32 32"><circle cx="14" cy="14" r="12"/><path d="M14 4V9M14 19V24M4 14H9M19 14H24M12 7H16M12 21H16M7 12V16M21 12V16M22 23 30 31"/></svg><span class="val">22%</span><svg class="chev" width="12" height="16"><use href="#rt"/></svg></div>
<div class="cell d-flex align-items-center"><svg width="28" height="26" viewBox="0 0 28 26"><path d="M2 12 12 2 19 8 9 19ZM16 24Q24 22 23 10M18 13 23 9 27 14"/></svg><span class="val">0.000°</span><svg class="chev" width="12" height="16"><use href="#rt"/></svg></div>
<div class="cell d-flex align-items-center"><svg width="30" height="18" viewBox="0 0 30 18"><path d="M1 3H29V15H1ZM8 15V11M15 15V10M22 15V11"/></svg><span class="val">1:100</span><svg class="chev" width="12" height="16"><use href="#rt"/></svg></div>
<div class="cell d-flex align-items-center"><svg width="32" height="28" viewBox="0 0 32 28"><path d="M11 2H30L22 12H3ZM7 12 3 18H22L30 8M7 18 2 25H21L30 14"/></svg><span class="val">00 - Tous les ca...</span><svg class="chev" width="12" height="16"><use href="#rt"/></svg></div>
<div class="cell d-flex align-items-center"><svg width="30" height="24" viewBox="0 0 30 24"><path d="M3 2H27V22H3ZM3 8H27M3 17H27M8 2 12 8M15 2 19 8M22 2 26 8M5 16 12 9M12 16 19 9M19 16 26 9"/></svg><span class="val">Modèle entier</span><svg class="chev" width="12" height="16"><use href="#rt"/></svg></div>
<div class="cell d-flex align-items-center"><svg width="28" height="28" viewBox="0 0 28 28"><path d="M8 2V17L14 26 20 17V2M8 17H20"/></svg><span class="val">00 - Par outils e...</span><svg class="chev" width="12" height="16"><use href="#rt"/></svg></div>
<div class="cell d-flex align-items-center"><svg width="32" height="24" viewBox="0 0 32 24"><path d="M2 2H30V22H2ZM9 8H23V16H9Z"/></svg><span class="val start">00 - Tout</span></div>
</div>
</main>
</div>
<footer class="foot flex-shrink-0"></footer>

<script>
// Wall piers between the window openings, as [start, end] along the long axis of the building.
const NS = 'http://www.w3.org/2000/svg';
const frame = document.querySelector('#plan > g[transform]');
function add(d, fill) {
  const p = document.createElementNS(NS, 'path');
  p.setAttribute('d', d);
  p.setAttribute('fill', `url(#${fill})`);
  p.style.cssText = 'stroke:#151515;stroke-width:2';
  frame.append(p);
}
[[75,102],[143,168],[210,235],[277,302],[343,368],[410,441],[635,674],[742,781],[974,1002],[1044,1070],[1111,1136],[1178,1203]]
  .forEach(([a, b]) => add(`M${a} 0H${b}V7H${b - 1}V10H${b - 3}V18H${a + 3}V12H${a + 1}V8H${a}Z`, 'brick'));
[[78,112],[146,182],[214,250],[281,317],[348,385],[416,453],[961,998],[1028,1065],[1096,1133],[1164,1201],[1232,1269],[1299,1337]]
  .forEach(([a, b]) => add(`M${a} 286H${b}V293H${b + 3}V303H${a - 1}V296H${a}Z`, 'brick'));
[[79,138],[165,225]].forEach(([a, b]) => add(`M1 ${a}H8V${a - 2}H17V${b - 2}H9V${b}H1Z`, 'brick'));
[[81,139],[168,226]].forEach(([a, b]) => add(`M1396 ${a}H1404V${a - 2}H1412V${b - 2}H1405V${b}H1396Z`, 'brick'));
[[571,576,579],[609,613,616],[645,672,675],[705,709,712],[741,768,771],[800,804,808],[838,845,845]]
  .forEach(([a, b, c]) => add(`M${a} 317H${b}V325H${c}V333H${a}V326H${a}Z`, 'water'));
</script>
</body>
</html>
